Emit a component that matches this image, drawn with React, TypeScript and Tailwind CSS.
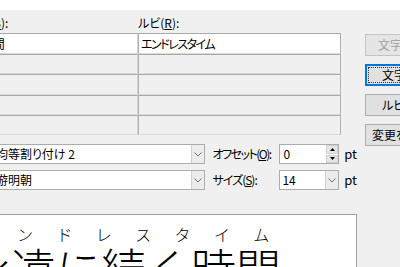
import React from 'react';

// Phonetic guide (ルビ) dialog, cropped view
const rows = [
  { h: 'h-[21px]', base: '永遠に続く時間', ruby: 'エンドレスタイム', bg: 'bg-white' },
  { h: 'h-[20px]', base: '', ruby: '', bg: 'bg-[#f0f0f0]' },
  { h: 'h-[21px]', base: '', ruby: '', bg: 'bg-[#f0f0f0]' },
  { h: 'h-[20px]', base: '', ruby: '', bg: 'bg-[#f0f0f0]' },
  { h: 'h-[20px]', base: '', ruby: '', bg: 'bg-[#f0f0f0]' },
];

const rubyChars = ['エ', 'ン', 'ド', 'レ', 'ス', 'タ', 'イ', 'ム'];

function Chevron() {
  return (
    <svg width="8" height="5" viewBox="0 0 8 5">
      <path d="M0.5 0.5 L4 4 L7.5 0.5" fill="none" stroke="#6d6d6d" strokeWidth="1" />
    </svg>
  );
}

function Select({ value, width }: { value: string; width: string }) {
  return (
    <div className={`${width} h-[20px] bg-white border border-[#acacac] flex`}>
      <div className="flex-1 pl-[2px] leading-[18px] whitespace-nowrap overflow-hidden">{value}</div>
      <div className="w-[13px] border-l border-[#d0d0d0] bg-[#ececec] flex items-center justify-center">
        <Chevron />
      </div>
    </div>
  );
}

function Spin({ value }: { value: string }) {
  return (
    <div className="w-[60px] h-[20px] bg-white border border-[#acacac] flex">
      <div className="flex-1 pl-[3px] leading-[18px]">{value}</div>
      <div className="w-[12px] flex flex-col gap-[1px] bg-white">
        <div className="flex-1 bg-[#e6e6e6] border border-[#cfcfcf] flex items-center justify-center">
          <svg width="5" height="3" viewBox="0 0 5 3">
            <path d="M0 3 L2.5 0 L5 3 Z" fill="#000" />
          </svg>
        </div>
        <div className="flex-1 bg-[#e6e6e6] border border-[#cfcfcf] flex items-center justify-center">
          <svg width="5" height="3" viewBox="0 0 5 3">
            <path d="M0 0 L2.5 3 L5 0 Z" fill="#000" />
          </svg>
        </div>
      </div>
    </div>
  );
}

export default function App() {
  return (
    <div className="w-[400px] h-[267px] overflow-hidden bg-white font-['Noto_Sans_CJK_JP',sans-serif] text-[12px] text-black [font-feature-settings:'palt']">
      <div className="h-[10px] bg-white" />
      <div className="ml-[-80px] w-[600px] h-[257px] bg-[#f0f0f0] flex gap-[8px]">
        {/* Left: table, options, preview */}
        <div className="w-[437px] flex flex-col">
          <div className="mt-[5px] h-[16px] flex leading-[16px]">
            <div className="w-[218px] pl-[9px] whitespace-nowrap">
              対象文字列(<u>B</u>):
            </div>
            <div>
              ルビ(<u>R</u>):
            </div>
          </div>

          <div className="mt-[2px] w-[422px] flex flex-col">
            {rows.map((r, i) => (
              <div key={i} className={`${r.h} flex`}>
                <div className={`w-[218px] ${r.bg} border-t border-b border-t-[#a9a9a9] border-b-[#dadada] border-r border-r-[#d4d4d4] pl-[5px] flex items-center whitespace-nowrap`}>
                  {r.base}
                </div>
                <div className={`w-[203px] ${r.bg} border-t border-b border-t-[#a9a9a9] border-b-[#dadada] border-l border-l-[#b0b0b0] border-r border-r-[#b0b0b0] pl-[2px] flex items-center whitespace-nowrap tracking-[-1.5px]`}>
                  {r.ruby}
                </div>
              </div>
            ))}
          </div>

          <div className="mt-[9px] flex flex-col gap-[6px]">
            <div className="h-[20px] flex items-center">
              <div className="w-[73px] whitespace-nowrap">
                配置(<u>L</u>):
              </div>
              <Select value="均等割り付け 2" width="w-[212px]" />
              <div className="ml-[8px] w-[67px] whitespace-nowrap tracking-[-1.5px]">
                オフセット(<u>O</u>):
              </div>
              <Spin value="0" />
              <span className="ml-[5px] text-[13px]">pt</span>
            </div>
            <div className="h-[20px] flex items-center">
              <div className="w-[73px] whitespace-nowrap">
                フォント(<u>F</u>):
              </div>
              <Select value="游明朝" width="w-[212px]" />
              <div className="ml-[8px] w-[67px] whitespace-nowrap tracking-[-1px]">
                サイズ(<u>S</u>):
              </div>
              <Select value="14" width="w-[60px]" />
              <span className="ml-[5px] text-[13px]">pt</span>
            </div>
          </div>

          {/* Preview */}
          <div className="mt-[24px] w-[437px] h-[60px] bg-white border-t border-r border-[#a0a0a0] pl-[46px] pt-[11px]">
            <div className="inline-flex flex-col font-light [font-feature-settings:normal]">
              <div className="flex justify-around text-[16px] leading-[16px]">
                {rubyChars.map((c, i) => (
                  <span key={i}>{c}</span>
                ))}
              </div>
              <div className="mt-[3px] text-[45px] leading-[45px] whitespace-nowrap">永遠に続く時間</div>
            </div>
          </div>
        </div>

        {/* Right: buttons */}
        <div className="mt-[24px] w-[110px] flex flex-col gap-[8px]">
          <button disabled className="h-[22px] bg-[#e5e5e5] border border-[#c4c4c4] text-[#a0a0a0] whitespace-nowrap text-left pl-[12px]">
            文字列全体(<u>G</u>)
          </button>
          <button className="h-[22px] bg-[#e1e1e1] border-2 border-[#0078d7] outline-1 outline-dotted outline-[#333] outline-offset-[-4px] whitespace-nowrap text-left pl-[15px]">
            文字単位(<u>M</u>)
          </button>
          <button className="h-[22px] bg-[#e1e1e1] border border-[#adadad] whitespace-nowrap text-left pl-[16px]">
            ルビの解除(<u>C</u>)
          </button>
          <button className="h-[22px] bg-[#e1e1e1] border border-[#adadad] whitespace-nowrap text-left pl-[6px]">
            変更を元に戻す(<u>D</u>)
          </button>
        </div>
      </div>
    </div>
  );
}
